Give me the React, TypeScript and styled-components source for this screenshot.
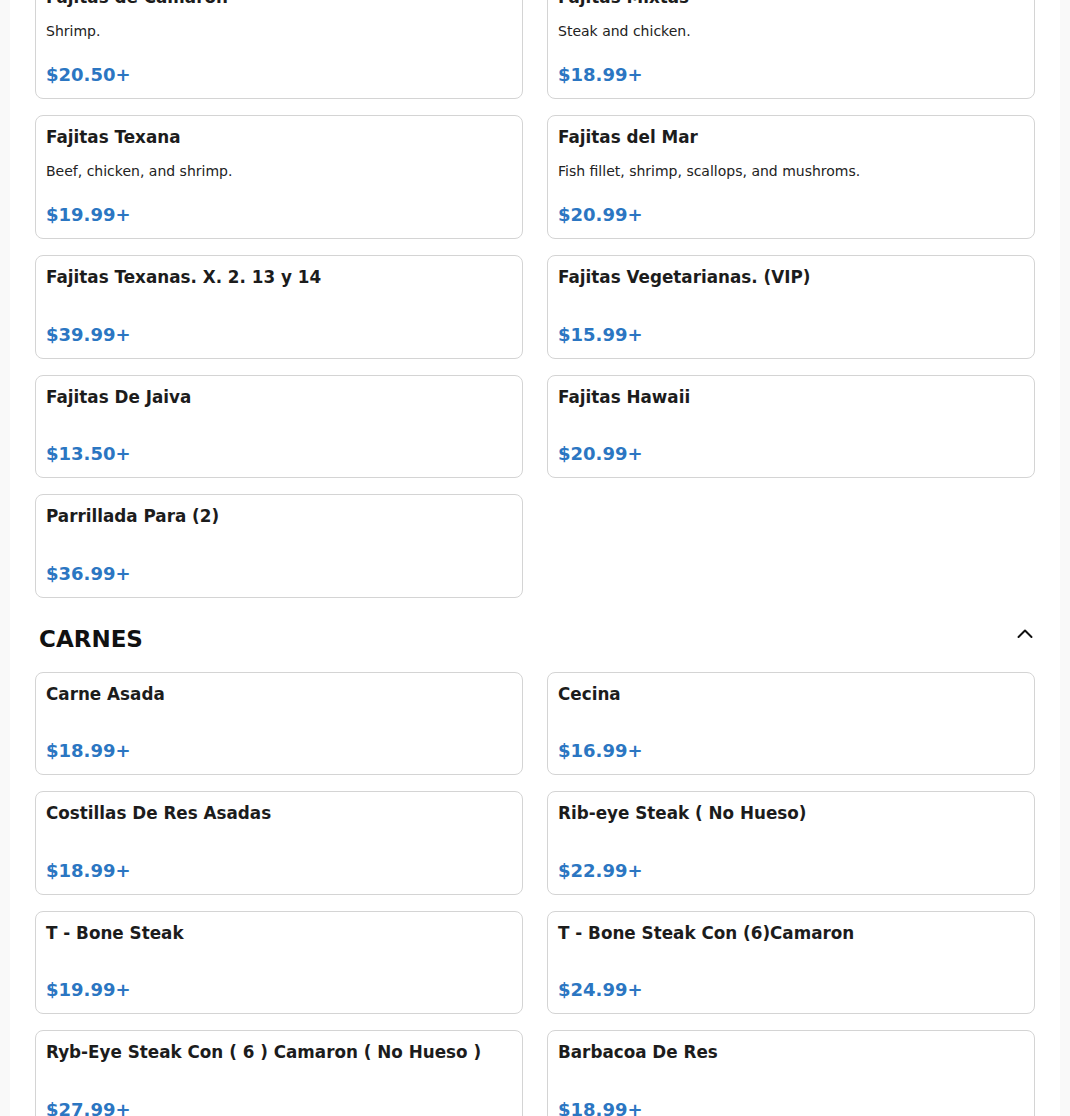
import React from "react";
import styled, { createGlobalStyle } from "styled-components";

const GlobalStyle = createGlobalStyle`
  html, body {
    margin: 0;
    padding: 0;
    background: #f9f9f9;
    font-family: "DejaVu Sans", "Noto Sans", sans-serif;
    overflow: hidden;
  }
`;

type Item = { name: string; desc?: string; price: string };

const fajitas: Item[] = [
  { name: "Fajitas de Camarón", desc: "Shrimp.", price: "$20.50+" },
  { name: "Fajitas Mixtas", desc: "Steak and chicken.", price: "$18.99+" },
  { name: "Fajitas Texana", desc: "Beef, chicken, and shrimp.", price: "$19.99+" },
  { name: "Fajitas del Mar", desc: "Fish fillet, shrimp, scallops, and mushroms.", price: "$20.99+" },
  { name: "Fajitas Texanas. X. 2. 13 y 14", price: "$39.99+" },
  { name: "Fajitas Vegetarianas. (VIP)", price: "$15.99+" },
  { name: "Fajitas De Jaiva", price: "$13.50+" },
  { name: "Fajitas Hawaii", price: "$20.99+" },
  { name: "Parrillada Para (2)", price: "$36.99+" },
];

const carnes: Item[] = [
  { name: "Carne Asada", price: "$18.99+" },
  { name: "Cecina", price: "$16.99+" },
  { name: "Costillas De Res Asadas", price: "$18.99+" },
  { name: "Rib-eye Steak ( No Hueso)", price: "$22.99+" },
  { name: "T - Bone Steak", price: "$19.99+" },
  { name: "T - Bone Steak Con (6)Camaron", price: "$24.99+" },
  { name: "Ryb-Eye Steak Con ( 6 ) Camaron ( No Hueso )", price: "$27.99+" },
  { name: "Barbacoa De Res", price: "$18.99+" },
];

// the page is shown scrolled a little, so the first row starts above the top edge
const Main = styled.main`
  margin: -25px 10px 0;
  background: #ffffff;
  padding: 0 25px 40px;
  min-height: 100vh;
`;

const Grid = styled.div`
  display: grid;
  grid-template-columns: 1fr 1fr;
  column-gap: 24px;
  row-gap: 16px;
`;

const Card = styled.div`
  border: 1px solid #d4d4d4;
  border-radius: 8px;
  padding: 10px 10px 11px;
  display: flex;
  flex-direction: column;
  color: #1c1c1c;
`;

const Title = styled.div`
  font-size: 16.8px;
  font-weight: bold;
  line-height: 22px;
  margin-bottom: 12.5px;
`;

const Desc = styled.div`
  font-size: 14px;
  line-height: 20px;
  margin-bottom: 0.5px;
  color: #222;
`;

const Price = styled.div`
  margin-top: 22px;
  font-size: 18px;
  font-weight: bold;
  line-height: 24px;
  color: #2b76c2;
`;

const SectionHead = styled.div`
  display: flex;
  justify-content: space-between;
  align-items: flex-start;
  padding: 27px 2px 19px 4px;
`;

const SectionTitle = styled.h2`
  margin: 0;
  font-size: 23px;
  line-height: 28px;
  font-weight: bold;
  color: #111;
`;

const Chevron = styled.svg`
  margin-top: 4px;
`;

const MenuCard = ({ item }: { item: Item }) => (
  <Card>
    <Title>{item.name}</Title>
    {item.desc && <Desc>{item.desc}</Desc>}
    <Price>{item.price}</Price>
  </Card>
);

export default function App() {
  return (
    <>
      <GlobalStyle />
      <Main>
        <Grid>
          {fajitas.map((it) => (
            <MenuCard key={it.name} item={it} />
          ))}
        </Grid>
        <SectionHead>
          <SectionTitle>CARNES</SectionTitle>
          <Chevron width="16" height="10" viewBox="0 0 16 10" fill="none" stroke="#111" strokeWidth="2" strokeLinecap="round" strokeLinejoin="round">
            <path d="M1.5 8L8 1.5L14.5 8" />
          </Chevron>
        </SectionHead>
        <Grid>
          {carnes.map((it) => (
            <MenuCard key={it.name} item={it} />
          ))}
        </Grid>
      </Main>
    </>
  );
}
